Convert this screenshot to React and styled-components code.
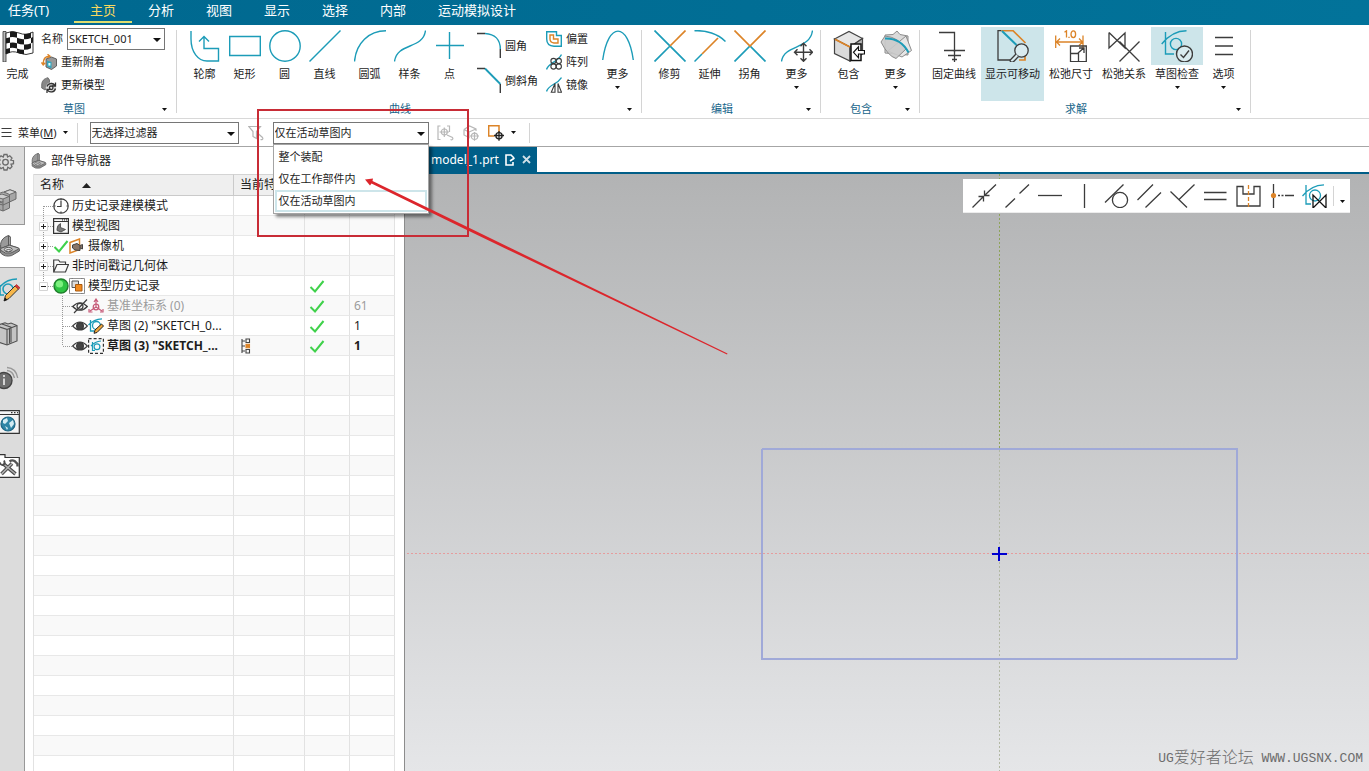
import React from 'react';
import styled, { createGlobalStyle, css } from 'styled-components';

const BLUE = '#1c9cb8';
const ORANGE = '#dc8428';
const INK = '#3c3c3c';

const GlobalStyle = createGlobalStyle`
  * { box-sizing: border-box; }
  body {
    margin: 0;
    background: #fff;
    color: #1c1c1c;
    font-family: "Noto Sans", "Noto Sans CJK SC", sans-serif;
    font-size: 11px;
    line-height: 16px;
    overflow: hidden;
  }
  button, select { font: inherit; color: inherit; margin: 0; padding: 0; border: 0; background: none; }
  svg { display: block; flex: none; }
  a { color: inherit; text-decoration: none; }
`;

const Page = styled.div`
  position: relative;
  display: flex;
  flex-direction: column;
  height: 100vh;
  overflow: hidden;
`;

/* ---------- menu bar ---------- */
const MenuBar = styled.nav`
  display: flex;
  flex: none;
  height: 25px;
  background: linear-gradient(90deg, #00688f, #02739a);
  color: #fff;
  font-size: 13px;
`;
const TaskMenu = styled.button`
  width: 74px;
  padding: 0 0 6px 8px;
  text-align: left;
`;
const MenuTab = styled.button`
  padding: 0 16px;
  padding-bottom: ${p => (p.$active ? 2 : 6)}px;
  border-bottom: ${p => (p.$active ? '2px solid #e0dc6c' : '0')};
  height: ${p => (p.$active ? 23 : 25)}px;
  color: ${p => (p.$active ? '#f8d860' : '#fff')};
`;

/* ---------- ribbon ---------- */
const Ribbon = styled.div`
  display: flex;
  flex: none;
  padding: 2px 0 1px;
  border-bottom: 1px solid #d8d8d8;
`;
const Group = styled.section`
  display: flex;
  flex-direction: column;
  flex: none;
  padding: 0 4px 0 8px;
  margin-left: ${p => (p.$clipped ? -10 : 0)}px;
`;
const GroupTools = styled.div`
  display: flex;
  gap: 1px;
  height: 74px;
`;
const GroupFooter = styled.div`
  display: flex;
  align-items: center;
  margin: 0 -4px 0 -8px;
`;
const GroupTitle = styled.span`
  flex: 1;
  text-align: center;
  color: #17658a;
`;
const Launcher = styled.button`
  width: 18px;
  height: 16px;
  padding-left: 4px;
`;
const Divider = styled.div`
  flex: none;
  width: 1px;
  margin: 3px 0 4px;
  background: #d4d4d4;
`;
const Space = styled.div`
  flex: none;
  width: ${p => p.$w}px;
`;
const ToolButton = styled.button`
  display: flex;
  flex-direction: column;
  align-items: center;
  flex: none;
  min-width: 39px;
  height: 74px;
  white-space: nowrap;
  background: ${p => (p.$on ? '#cde5ea' : 'none')};
`;
const IconBox = styled.span`
  display: flex;
  justify-content: center;
  width: 100%;
  height: 38px;
  padding-top: 3px;
  background: ${p => (p.$on ? '#cde5ea' : 'none')};
`;
const ToolLabel = styled.span`
  padding: 1px 4px 4px;
`;
const Stack = styled.div`
  display: flex;
  flex-direction: column;
  ${p => p.$tall && css`padding-top: 1px;`}
`;
const SmallTool = styled.button`
  display: flex;
  align-items: center;
  gap: 4px;
  height: ${p => (p.$tall ? 35 : 23)}px;
  white-space: nowrap;
`;
const Field = styled.label`
  display: flex;
  align-items: center;
  gap: 4px;
  height: 23px;
  padding-top: 1px;
  white-space: nowrap;
`;

/* ---------- select boxes ---------- */
const SelectWrap = styled.span`
  position: relative;
  display: block;
  flex: none;
  width: ${p => p.$w}px;
`;
const SelectBox = styled.select`
  appearance: none;
  display: block;
  width: 100%;
  height: 22px;
  padding: 0 16px 0 1px;
  border: 1px solid #767676;
  border-radius: 0;
  background: #fff;
`;
const SelectCaret = styled.svg`
  position: absolute;
  right: 4px;
  top: 10px;
  pointer-events: none;
`;
const OptionList = styled.ul`
  position: absolute;
  z-index: 5;
  top: 22px;
  left: 0;
  width: 100%;
  margin: 0;
  padding: 1px;
  list-style: none;
  border: 1px solid #a4a4a4;
  background: #fff;
  box-shadow: 3px 3px 3px rgba(0, 0, 0, 0.45);
`;
const Option = styled.li`
  height: 22px;
  padding: 1px 2px;
  border: 2px solid ${p => (p.$current ? '#cde5ea' : 'transparent')};
`;

/* ---------- selection toolbar ---------- */
const SelectionBar = styled.div`
  display: flex;
  align-items: center;
  flex: none;
  height: 28px;
  border-bottom: 1px solid #a6a6a6;
`;
const MenuButton = styled.button`
  display: flex;
  align-items: center;
  gap: 6px;
  height: 22px;
  padding-left: 1px;
  white-space: nowrap;
`;
const BarDivider = styled.div`
  width: 1px;
  height: 20px;
  background: #d4d4d4;
`;
const IconButton = styled.button`
  display: flex;
  align-items: center;
  justify-content: center;
  width: ${p => p.$w || 26}px;
  height: ${p => (p.$low ? 34 : 22)}px;
  padding-top: ${p => (p.$low ? 12 : 0)}px;
`;

/* ---------- body ---------- */
const Body = styled.div`
  display: flex;
  flex: 1;
  min-height: 0;
`;
const Rail = styled.nav`
  display: flex;
  flex-direction: column;
  flex: none;
  width: 25px;
  background: #dcdcdc;
`;
const RailButton = styled.button`
  display: flex;
  align-items: center;
  width: 25px;
  height: ${p => p.$h || 44}px;
  overflow: hidden;
  ${p => p.$active
    ? css`background: #fff; border-top: 1px solid #989898; border-bottom: 1px solid #989898;`
    : css`border-right: 1px solid #989898;`}
`;
const RailFill = styled.div`
  flex: 1;
  border-right: 1px solid #989898;
`;
const Navigator = styled.aside`
  display: flex;
  flex-direction: column;
  flex: none;
  width: 380px;
  padding: 0 9px 0 8px;
  border-right: 1px solid #8c8c8c;
  overflow: hidden;
  font-size: 12px;
`;
const NavTitle = styled.h1`
  display: flex;
  align-items: center;
  gap: 4px;
  flex: none;
  height: 27px;
  margin: 0 0 0 -2px;
  font-size: 12px;
  font-weight: 400;
`;
const Tree = styled.table`
  flex: none;
  width: 100%;
  table-layout: fixed;
  border-collapse: separate;
  border-spacing: 0;
  border-left: 1px solid #e2e2e2;
`;
const HeadCell = styled.th`
  width: ${p => p.$w};
  height: 22px;
  padding: 0 6px;
  border-top: 1px solid #d4d4d4;
  border-bottom: 1px solid #cacaca;
  border-right: 1px solid #cacaca;
  background: #efefef;
  font-weight: 400;
  text-align: left;
  white-space: nowrap;
  overflow: hidden;
`;
const HeadLabel = styled.span`
  display: flex;
  align-items: center;
  gap: 18px;
`;
const Row = styled.tr`
  background: ${p => (p.$odd ? '#f9f9f9' : '#fff')};
  color: ${p => (p.$dim ? '#9c9c9c' : 'inherit')};
  font-weight: ${p => (p.$bold ? 700 : 400)};
`;
const Cell = styled.td`
  height: 20px;
  padding: 0 0 0 ${p => p.$pad || 0}px;
  border-right: 1px solid #e2e2e2;
  border-bottom: 1px solid #e8e8e8;
  white-space: nowrap;
  overflow: hidden;
  vertical-align: middle;
`;
const Item = styled.div`
  display: flex;
  align-items: center;
  height: 19px;
`;
const ItemText = styled.span`
  padding-left: 3px;
`;

/* ---------- graphics window ---------- */
const Viewport = styled.main`
  display: flex;
  flex-direction: column;
  flex: 1;
  min-width: 0;
`;
const FileTabs = styled.div`
  display: flex;
  flex: none;
  height: 27px;
  border-bottom: 2px solid #005e88;
`;
const FileTab = styled.button`
  display: flex;
  align-items: center;
  gap: 6px;
  padding: 0 6px 0 26px;
  background: #005e88;
  color: #fff;
  font-size: 12px;
`;
const Canvas = styled.div`
  position: relative;
  flex: 1;
  background: linear-gradient(#b2b3b4, #e5e6e8);
  overflow: hidden;
`;
const Sketch = styled.svg`
  position: absolute;
  inset: 0;
  width: 100%;
  height: 100%;
`;
const FloatBar = styled.div`
  position: absolute;
  top: 5px;
  right: 19px;
  display: flex;
  align-items: center;
  height: 34px;
  padding-left: 5px;
  background: #fff;
  border-bottom: 1px solid #ececec;
`;
const ConstraintButton = styled.button`
  display: flex;
  justify-content: center;
  width: 33px;
`;
const Watermark = styled.span`
  position: absolute;
  right: 6px;
  bottom: 2px;
  display: flex;
  align-items: center;
  color: #6c6c6c;
  font-family: "Liberation Mono", "Noto Sans CJK SC", monospace;
  font-size: 13px;
  line-height: 20px;
  white-space: pre;
`;
const WatermarkName = styled.span`
  font-size: 16px;
  font-weight: 300;
`;
const Annotation = styled.svg`
  position: absolute;
  top: 0;
  left: 0;
  z-index: 10;
  pointer-events: none;
`;

/* ---------- drawings ---------- */
const Svg = ({ w = 32, h = w, children, sw = 1.4, s = BLUE }) => (
  <svg width={w} height={h} viewBox={`0 0 ${w} ${h}`} fill="none" stroke={s} strokeWidth={sw} aria-hidden="true">
    {children}
  </svg>
);
const Caret = ({ big }) => big
  ? <Svg w={8} h={4} s="none"><path d="M0 0H8L4 4Z" fill="#111" /></Svg>
  : <Svg w={5} h={3} s="none"><path d="M0 0H5L2.5 3Z" fill="#111" /></Svg>;

const Bracket = ({ w = 16, h = 16 }) => (
  <svg width={w} height={h} viewBox="0 0 20 22" fill="none" stroke="#5a5a5a" strokeWidth="1" aria-hidden="true">
    <path d="M.6 13V9.5C1 5 4 2 8.5.6L10.2 1.8V11L3 14.5Z" fill="#9a9a9a" />
    <path d="M8.5.6 10.2 1.8V11L8.5 10Z" fill="#c4c4c4" />
    <path d="M.6 13.5 9.5 10.2 18.5 13Q19.8 13.8 19.4 16L11.5 20.6Q5 22.3.6 18Z" fill="#8f8f8f" />
    <path d="M.6 13.5 9.5 10.2 18.5 13Q19.4 13.6 18 14.4L11 18Q5 19.5.6 15.2Z" fill="#bdbdbd" />
    <ellipse cx="8.3" cy="14.6" rx="4" ry="2.2" fill="#e4e4e4" />
    <path d="M5.5 15.4Q8.3 13.6 11.3 15.2" />
  </svg>
);

const ico = {
  flag: (
    <Svg s="none">
      <path d="M1 1.5H4V32H1Z" fill="#bbb" stroke="#333" strokeWidth=".8" />
      <path d="M4 3Q10 0 17 3T31 2V23Q24 26 17 23T4 24Z" fill="#fff" stroke="#222" strokeWidth=".9" />
      <path d="M8 1.7Q12 1 15 2.2V7.8Q11 6.5 8 7.3ZM22 4Q26 4.2 29 2.5V8Q25 9.6 22 9.2ZM4 8.2 8 7.3V12.7L4 13.6ZM15 7.8Q19 9.5 22 9.2V14.6Q18 14.4 15 13.2ZM8 12.7Q12 12 15 13.2V18.4Q11 17.4 8 18ZM22 14.6Q26 14.8 29 13.2V18.3Q26 19.8 22 19.8ZM4 19 8 18V23Q6 23.2 4 24ZM15 18.4Q18 19.8 22 19.8V24.3Q18 24 15 22.6ZM29 8 31 7V12.5L29 13.2Z" fill="#1a1a1a" />
    </Svg>
  ),
  profile: <Svg><path d="M2 1V9C2 22 9 31 18 31H29.5V18.5H15V6.5M10 11.5L15 6.5L20 11.5" /></Svg>,
  rect: <Svg><path d="M.7 6.5H31.3V25.5H.7Z" /></Svg>,
  circle: <Svg><circle cx="16" cy="16" r="15.2" /></Svg>,
  line: <Svg><path d="M.5 31.5L31.5.5" /></Svg>,
  arc: <Svg><path d="M.5 31.5C2 13 15 .8 32 .8" /></Svg>,
  spline: <Svg><path d="M.5 31.5C3 12 29 20 31.5.5" /></Svg>,
  point: <Svg><path d="M2 15.5H30M15.5 2V29" /></Svg>,
  parabola: <Svg><path d="M.7 30C6-8.5 26-8.5 31.3 30" /></Svg>,
  fillet: <Svg w={24} h={27}><path d="M0 1.5H8M23.3 17V26" stroke={INK} /><path d="M8 1.5C18 2 23.3 8 23.3 17" /></Svg>,
  chamfer: <Svg w={24} h={27}><path d="M0 1.5H8M23.3 17V26" stroke={INK} /><path d="M8 1.5L23.3 17" strokeWidth="1.8" /></Svg>,
  offset: (
    <Svg w={16}><path d="M.7.7H10.5V4.5H15.3V15.3H8C3 15 .7 12 .7 8Z" /><path d="M4 4H7.5V8H12V12H8C5 11.5 4 10 4 8Z" stroke={ORANGE} /></Svg>
  ),
  pattern: (
    <Svg w={16}><path d="M.5 15.5C3 8 11 9 15.5.5" /><g stroke={INK} strokeWidth="1.1"><circle cx="7.5" cy="7" r="2.6" /><circle cx="12.8" cy="7" r="2.6" /><circle cx="7.5" cy="12.5" r="2.6" /><circle cx="12.8" cy="12.5" r="2.6" /></g></Svg>
  ),
  mirror: (
    <Svg w={16}><path d="M.5 14.5C3 7 11 8 15.5.5" /><path d="M9 6.5V15.3H5.3ZM12 6.5V15.3H15.5Z" stroke={INK} strokeWidth="1.1" /></Svg>
  ),
  reattach: (
    <Svg w={16}>
      <path d="M5 5L10.5 3 15.5 5V12L10.5 15.5 5 13Z" fill="#999" stroke="#555" strokeWidth=".9" />
      <path d="M6 6.5L10.5 8V14.5L6 12.5Z" fill="#35a5bd" stroke="none" /><rect x="7.4" y="9" width="2" height="2.6" fill="#dff" stroke="none" />
      <path d="M.5 8.5 2.2 11 4.3 8.8M2.2 10.5C2 5 4 2.5 8 2.2M6.5.3 9 2.2 6.5 4" stroke={ORANGE} />
    </Svg>
  ),
  update: (
    <Svg w={16} s="#333" sw={1.3}>
      <path d="M.7 8C.7 4 3 1.5 7 .7L8.5 3V9L4 13 .7 11Z" fill="#888" stroke="#555" strokeWidth=".7" />
      <circle cx="10" cy="10.5" r="5.2" fill="#ddd" stroke="none" />
      <path d="M6 9.5C7 6 12 5.5 14 8.5M14.5 5.5V9H11M14.5 11.5C13.5 15.5 8.5 16 6.5 13M6 16V12.3H9.5" /><circle cx="10.2" cy="10.8" r="1.8" />
    </Svg>
  ),
  trim: <Svg sw={1.7}><path d="M.5.5L31.5 31.5M.5 31.5L16 16" /><path d="M16 16L31.5.5" stroke={ORANGE} /></Svg>,
  extend: <Svg sw={1.5}><path d="M.5.8C12 0 24 4 31.5 11.5M.5 31.5L8 24" /><path d="M8 24L24 8" stroke={ORANGE} strokeWidth="1.7" /></Svg>,
  corner: <Svg sw={1.7}><path d="M.5 31.5L16 16 31.5 31.5" /><path d="M.5.5L16 16 31.5.5" stroke={ORANGE} /></Svg>,
  move: (
    <Svg><path d="M.5 31.5C3 14 29 20 31.5.5" /><path d="M13.5 22.3H31.5M22.5 13V31.5M16.5 19.3L13.5 22.3 16.5 25.3M28.5 19.3L31.5 22.3 28.5 25.3M19.5 16.3L22.5 13.3 25.5 16.3M19.5 28.3L22.5 31.3 25.5 28.3" stroke={INK} /></Svg>
  ),
  include: (
    <Svg s="#444" sw={1.2}>
      <path d="M1.5 9L16 1.5 29.5 8.5 17 17Z" fill="#e6e6e6" /><path d="M1.5 9L17 17V31L1.5 23.5Z" fill="#dadada" /><path d="M17 17L29.5 8.5V24L17 31Z" fill="#b4b4b4" />
      <path d="M2 9.3L17 17" stroke={ORANGE} strokeWidth="1.8" />
      <path d="M18 14H28V30.5H18Z" fill="#fff" stroke="#111" strokeWidth="1.5" />
      <path d="M31.5 20.5H25.5V16.8L20.5 22.3 25.5 27.8V24H31.5Z" fill="#fff" stroke="#111" />
    </Svg>
  ),
  includeMore: (
    <Svg s="#8c8c8c" sw={1}>
      <path d="M5 5L13 4.5 17 1 20 4.5 28 6V25L5 23Z" fill="#dadada" />
      <path d="M8 21 26 6 31.5 20.5 22 27Z" fill="#e6e6e6" />
      <path d="M1 12 5 6Q18 7 26 19L16 28.5Q8 26 1 12Z" fill="#cacaca" fillOpacity=".9" />
      <path d="M5 8.5Q21 8 28.5 22.5" stroke={BLUE} strokeWidth="2" />
    </Svg>
  ),
  fixed: <Svg s={INK} sw={1.3}><path d="M1 2.5H16.5V22M6 20.5H27M10 25.5H23M14 29.5H19" /><path d="M16.5 20V32" /></Svg>,
  movable: (
    <Svg s={INK} sw={1.3}>
      <path d="M4.5.7H1V30H14" /><path d="M4.5.7H16L28.5 13M28 24V30H22" stroke={ORANGE} strokeWidth="1.7" /><path d="M5 1L19.5 15" stroke={BLUE} strokeWidth="2" />
      <circle cx="24.5" cy="20.5" r="6.7" fill="#d9ebef" /><path d="M19 24 13 30.2C13 32.5 16 32.5 17 31.2L21.5 26.5" fill="#d9ebef" />
    </Svg>
  ),
  relaxDim: (
    <Svg s={INK} sw={1.3}>
      <path d="M.7 5.5V18M28 5.5V18M1 12H28M5 8.5L1.5 12 5 15.5M24 8.5L27.5 12 24 15.5" stroke={ORANGE} />
      <path d="M9.5 2.2 11.5.8V7.5M14 6.7V8" stroke={ORANGE} /><ellipse cx="18.3" cy="4.2" rx="2.3" ry="3.4" stroke={ORANGE} />
      <path d="M15.5 16H31.3V31.7H15.5ZM15.5 23.5H23.5V31.7M23 23L28.5 18.3M24 18H29V23" />
    </Svg>
  ),
  relaxRel: <Svg s={INK} sw={1.3}><path d="M1 2.5V18L17 3V18L1 2.5M17 3V11M11.5 31.5L31.5 11.5M11.5 11.5 31.5 31.5" /></Svg>,
  check: (
    <Svg>
      <path d="M.7 14C8 5 16 .8 25.5.8M4.5 2V24H13" /><circle cx="15" cy="14" r="5.6" />
      <circle cx="23.5" cy="24" r="8" stroke={INK} fill="#d9ebef" /><path d="M19.5 24.5L22.5 27.5 28 20.5" stroke={INK} />
    </Svg>
  ),
  options: <Svg s={INK} sw={1.7}><path d="M7 7.5H25M7 16H25M7 24.5H25" /></Svg>,

  menu: <Svg w={11} s={INK} sw={1}><path d="M.5 1.5H10.5M.5 5.5H10.5M.5 9.5H10.5" /></Svg>,
  funnel: <Svg w={16} s="#b4b4b4" sw={1.2}><path d="M.7 1.5H12.5L8.5 6.5V13.5L5 11.5V6.5ZM10 8.5L14.5 12.5C15.5 14 14 15.2 12.5 14.5" /></Svg>,
  snapGrey: <Svg w={17} h={16} s="#b8b8b8" sw={1.2}><path d="M3.5 1H1V14.5H3.5M10 1H12.5V7M2.5 7H12M7.3 2.5V12M10 10L15.5 12.5C16.5 14 15 15.3 13.5 14.5" /><circle cx="7.3" cy="7" r="3" /></Svg>,
  boxGrey: <Svg w={17} h={16} s="#b8b8b8" sw={1.2}><path d="M1 4.5L6.5 1 13 4V6M1 4.5V10L6 12.5V7L1 4.5M6 7L13 4M7 11H16M11.5 7V15.7" /><circle cx="11.5" cy="11.3" r="3.2" /></Svg>,
  snap: <Svg w={16} s="#222" sw={1.3}><path d="M6.5 11H.7V.7H11V7" stroke={ORANGE} strokeWidth="1.5" /><path d="M6 10.5H16M11 6V15.8" /><circle cx="11" cy="10.7" r="3.1" /></Svg>,

  gear: (
    <Svg w={18} s="#6c6c6c" sw={1.3}><path d="M7 1.5H10L10.6 4 12.8 2.8 15 5 13.8 7 16.5 7.7V10.7L14 11.3 15 13.5 13 15.6 10.8 14.3 10 17H7L6.3 14.4 4 15.6 2 13.5 3 11.3 .5 10.5V7.7L3 7 2 5 4 2.8 6.3 4Z" transform="translate(-3)" /><circle cx="5.5" cy="9.2" r="2.8" /></Svg>
  ),
  assembly: (
    <Svg w={18} h={24} s="#6a6a6a" sw={1}>
      <path d="M-5 6 3 3 9 5V10L2 13-5 11Z" fill="#b4b4b4" /><path d="M4 3 10 .8 16 3V10L9.5 13V19L3 22-5 19V12L3 14" fill="#a6a6a6" />
      <path d="M4 3 10 .8 16 3 9.5 5.5Z" fill="#d6d6d6" /><path d="M-5 7 2 5 9 7.5 3 10-5 8Z" fill="#cecece" />
      <path d="M9.5 5.5V13M3 10V22M-5 14 3 16 9.5 13" />
    </Svg>
  ),
  pencilSketch: (
    <Svg w={20} h={26} sw={1.6}>
      <path d="M-2 12C4 4 10 2 17 2M0 8V18H4" /><circle cx="8" cy="12" r="5" />
      <path d="M4 24 5.5 18.5 15 9 18.5 12 9 21.5Z" fill="#f6b64a" stroke="#333" strokeWidth="1" /><path d="M15 9 16.5 7.5 20 10.8 18.5 12Z" fill="#d33" stroke="#a33" strokeWidth=".8" /><path d="M4 24 5 20.5 7.5 23Z" fill="#111" stroke="none" />
    </Svg>
  ),
  books: (
    <Svg w={18} h={24} s="#505050" sw={1.1}>
      <path d="M-2 3 5 .8 8 2 11 1 17 3.5V19L7 23-2 20Z" fill="#c4c4c4" />
      <path d="M-2 4.5 7 7.5V23M7 7.5 17 3.5M2 2 11 5.2V20.5M9.5 6.5V21.5" />
    </Svg>
  ),
  info: (
    <Svg w={20} h={24} s="#999" sw={1.4}><circle cx="4" cy="14.5" r="8" fill="#6f6f6f" stroke="#444" /><path d="M4 12.5V19M4 9V11" stroke="#eee" strokeWidth="1.6" /><path d="M7 4.5Q13 5 14.5 12M7 1.5Q16 2 17.7 12" /></Svg>
  ),
  web: (
    <Svg w={20} h={24} s="#333" sw={1.2}><path d="M-2 .7H19.3V23.3H-2Z" fill="#f4f4f4" /><path d="M-2 4.5H19.3M11 2.6h1.5M14 2.6h1.5M17 2.6h1" /><circle cx="8" cy="14" r="7" fill="#2f86a6" stroke="#1f6684" /><path d="M3 10 7 8 8 11 5 14 3 13ZM9 13 13 10 14 14 11 18ZM5 16 8 18 7 20Z" fill="#d4ecf3" stroke="none" /></Svg>
  ),
  wrench: (
    <Svg w={20} h={24} s="#333" sw={1.2}>
      <path d="M-2 .7H5V3.5H19.3V23.3H-2Z" fill="#fff" />
      <path d="M1.5 20 12 9.5M3 9.5 15.5 20" stroke="#4a4a4a" strokeWidth="3.6" /><path d="M1.5 20 12 9.5M3 9.5 15.5 20" stroke="#b0b0b0" strokeWidth="1.6" />
      <path d="M0 8.5Q.5 11.5 3.5 11 5.5 9.5 4 6.5" stroke="#4a4a4a" strokeWidth="1.8" /><path d="M9.5 7.5Q12 5.5 14.5 7L17.5 10V12.5" stroke="#555" strokeWidth="2.4" />
    </Svg>
  ),

  clock: <Svg w={16} s={INK} sw={1.2}><circle cx="8" cy="8" r="7.2" /><path d="M8 3V8.5H4M8 .8V2.5M8 13.5V15M1 8H2.5M13.5 8H15" /></Svg>,
  view: (
    <Svg w={16} s="#333" sw={1.2}><path d="M.6.6H15.4V15.4H.6ZM.6 3.5H15.4M9 2H10M11 2H12M13 2H14" /><path d="M4 11Q4 7 7.5 5.5V9.5L12.5 11.5 8 14 4 12.5Z" fill="#777" stroke="#444" strokeWidth=".8" /></Svg>
  ),
  camera: (
    <Svg w={16} s="#444" sw={1}><path d="M1 4.5 10.5 1V11.5L1 15Z" stroke={ORANGE} strokeWidth="1.5" /><path d="M3.5 7 8 5.5 11 7.5V12.5L6 12 3.5 10ZM11 7.5 13.5 6.5V11L11 10" fill="#8a7566" /></Svg>
  ),
  folder: <Svg w={16} s={INK} sw={1.2}><path d="M.7 14V2H5.5L7 4H12.5V6.5M.7 14 4 6.5H15.5L12.5 14Z" /></Svg>,
  ball: <Svg w={16} s="none"><circle cx="8" cy="8" r="7" fill="#2fc443" stroke="#1f7e2b" /><circle cx="6.5" cy="6" r="3.6" fill="#7df07f" /></Svg>,
  history: (
    <Svg w={16} s="#777" sw={1}><path d="M.5 4V.5H4M12 .5H15.5V4M15.5 12V15.5H12M4 15.5H.5V12M2.5.5H13.5M2.5 15.5H13.5M.5 2.5V13.5M15.5 2.5V13.5" strokeWidth=".8" /><path d="M3 3H9.5V9.5H3Z" fill="#ddd" stroke="#555" /><path d="M6.5 6.5H13V13H6.5Z" fill="#f28a1e" stroke="#a85a10" /></Svg>
  ),
  eye: <Svg w={16} s={INK} sw={1.2}><path d="M.7 8Q8 0 15.3 8 8 16 .7 8Z" /><circle cx="8" cy="8" r="3.4" fill="#444" /></Svg>,
  eyeOff: <Svg w={16} s={INK} sw={1.2}><path d="M.7 8.5Q8 1 15.3 8.5 8 16 .7 8.5ZM2 15 15 1.5" /><circle cx="8" cy="8.3" r="3" /></Svg>,
  csys: <Svg w={16} s="#c65a78" sw={1.2}><path d="M8 9V1.5M6 4 8 1 10 4M8 9 2 13M8 9 14 13M1 11V14H4.5M12 14H15V11" /><circle cx="8" cy="9" r="2.8" /></Svg>,
  sketchPen: (
    <Svg w={16} sw={1.3}><path d="M.5 7C4 3 8 1 14 .8M2.5 2V13H6" /><circle cx="8.5" cy="7.5" r="4" /><path d="M6 15.3 7 12 13.5 6 15.5 8 9 14.5Z" fill="#f0a63a" stroke="#222" strokeWidth="1" /></Svg>
  ),
  sketchOn: <Svg w={16} sw={1.2}><path d="M.6.6H15.4V15.4H.6Z" stroke="#333" strokeDasharray="3 2" /><path d="M3 8Q7 3.5 13 3M4.5 4V12.5H7" /><circle cx="9" cy="8.8" r="2.9" /></Svg>,
  tick: <Svg w={16} s="#3fd14b" sw={2}><path d="M1.5 9 6 13.5 14.5 3" /></Svg>,
  feature: <Svg w={10} h={16} s="#444" sw={1.1}><path d="M1 1V15M1 3H4M1 8H4M1 13H4M5 1H8.5V4.5H5ZM5 11.5H8.5V15H5Z" /><path d="M5 6.2H8.5V9.7H5Z" fill={ORANGE} stroke={ORANGE} /></Svg>,
  edit: <Svg w={11} h={12} s="#fff" sw={1.6}><path d="M6.5 1H1V11H8V8M6 1L9 4M5 7 9.5 4" /></Svg>,
  close: <Svg w={9} s="#cfe0e8" sw={1.8}><path d="M1 1L8 8M8 1L1 8" /></Svg>,
};

const C = ({ children }) => <Svg w={25} h={24} s={INK} sw={1.3}>{children}</Svg>;
const constraints = [
  ['重合', <C><path d="M.5 23.5 11.5 12.5M12.5 11.5 24 .5M6.5 12.5H11.5V17.5M12.5 6.5V11.5H17.5" /></C>],
  ['共线', <C><path d="M.5 23.5 10 14.5M14.5 9.5 24 .5" /></C>],
  ['水平', <C><path d="M0 11.5H24" /></C>],
  ['竖直', <C><path d="M13.5 0V24" /></C>],
  ['相切', <C><circle cx="16" cy="16" r="7.6" /><path d="M1 18.5 19.5 .5" /></C>],
  ['平行', <C><path d="M.5 16 16 .5M8.5 23.5 24 8.5" /></C>],
  ['垂直', <C><path d="M.5 7.5 17 23.5M9 15.5 24.5.5" /></C>],
  ['相等', <C><path d="M1 8.5H23.5M1 15.5H23.5" /></C>],
  ['对称', <C><path d="M1 2.5H7V10H18V2.5H24V22H1Z" /><path d="M12.5 1V24" stroke={ORANGE} strokeDasharray="4 2" /></C>],
  ['中点', <C><path d="M4.5 0V24M9 11.5H11M12.5 11.5H14.5M16 11.5H25" /><circle cx="4.5" cy="11.5" r="2.6" fill={ORANGE} stroke="none" /></C>],
  ['松弛', <C><g stroke={BLUE}><path d="M.5 12C6 5 13 1 22 .8M4 1V20H9" /><circle cx="13" cy="11.5" r="5.5" /></g><path d="M11 11V24L24 11V24Z" stroke="#111" /></C>],
];

/* ---------- composed parts ---------- */
const Tool = ({ icon, label, on, iconOn, more }) => (
  <ToolButton type="button" $on={on}>
    <IconBox $on={iconOn}>{ico[icon]}</IconBox>
    <ToolLabel>{label}</ToolLabel>
    {more && <Caret />}
  </ToolButton>
);
const Small = ({ icon, label, tall }) => (
  <SmallTool type="button" $tall={tall}>{ico[icon]}{label}</SmallTool>
);
const RibbonGroup = ({ title, clipped, children }) => (
  <>
    <Group $clipped={clipped} aria-label={title}>
      <GroupTools>{children}</GroupTools>
      <GroupFooter>
        <GroupTitle>{title}</GroupTitle>
        <Launcher type="button" aria-label={`${title}选项`}><Caret /></Launcher>
      </GroupFooter>
    </Group>
    <Divider />
  </>
);
const Combo = ({ id, w, value, label, children }) => (
  <SelectWrap $w={w}>
    <SelectBox id={id} aria-label={label} defaultValue={value}><option>{value}</option></SelectBox>
    <SelectCaret width="8" height="4" viewBox="0 0 8 4" aria-hidden="true"><path d="M0 0H8L4 4Z" fill="#111" /></SelectCaret>
    {children}
  </SelectWrap>
);

/* Dotted connector and expander drawn ahead of a tree item. */
const Lead = ({ box, first, last }) => (
  <Svg w={19} h={20} s="#999" sw={1}>
    <path d={`M9.5 ${first ? 10 : 0}V${last ? 10 : 20}M10 10.5H19`} strokeDasharray="1 1" />
    {box && <><path d="M5.5 6.5H13.5V14.5H5.5Z" fill="#fff" stroke="#d4d4d4" /><path d={`M7 10.5H12${box === '+' ? 'M9.5 8V13' : ''}`} stroke="#222" /></>}
  </Svg>
);
const ChildLead = ({ last }) => (
  <Svg w={38} h={20} s="#999" sw={1}><path d={`M28.5 0V${last ? 10 : 20}M29 10.5H38`} strokeDasharray="1 1" /></Svg>
);

const rows = [
  { lead: <Lead first />, icons: ['clock'], text: '历史记录建模模式' },
  { lead: <Lead box="+" />, icons: ['view'], text: '模型视图' },
  { lead: <Lead box="+" />, icons: ['tick', 'camera'], text: '摄像机' },
  { lead: <Lead box="+" />, icons: ['folder'], text: '非时间戳记几何体' },
  { lead: <Lead box="-" last />, icons: ['ball', 'history'], text: '模型历史记录', tick: true },
  { lead: <ChildLead />, icons: ['eyeOff', 'csys'], text: '基准坐标系 (0)', tick: true, num: '61', dim: true },
  { lead: <ChildLead />, icons: ['eye', 'sketchPen'], text: '草图 (2) "SKETCH_0...', tick: true, num: '1' },
  { lead: <ChildLead last />, icons: ['eye', 'sketchOn'], text: '草图 (3) "SKETCH_...', tick: true, num: '1', bold: true, feature: true },
  ...Array.from({ length: 22 }, () => ({})),
];

const rail = [['gear', '设置', 30], ['assembly', '装配导航器', 47], ['bracket', '部件导航器', 44], ['pencilSketch', '草图'], ['books', '重用库'], ['info', '信息'], ['web', '浏览器'], ['wrench', '工具']];

export default function App() {
  return (
    <Page>
      <GlobalStyle />
      <MenuBar>
        <TaskMenu type="button">任务(T)</TaskMenu>
        {['主页', '分析', '视图', '显示', '选择', '内部', '运动模拟设计'].map((t, i) => (
          <MenuTab type="button" key={t} $active={i === 0}>{t}</MenuTab>
        ))}
      </MenuBar>

      <Ribbon>
        <RibbonGroup title="草图" clipped>
          <Tool icon="flag" label="完成" />
          <Space $w={2} />
          <Stack>
            <Field htmlFor="sketch-name">名称<Combo id="sketch-name" w={98} value="SKETCH_001" /></Field>
            <Small icon="reattach" label="重新附着" />
            <Small icon="update" label="更新模型" />
          </Stack>
          <Space $w={6} />
        </RibbonGroup>
        <RibbonGroup title="曲线">
          <Tool icon="profile" label="轮廓" />
          <Tool icon="rect" label="矩形" />
          <Tool icon="circle" label="圆" />
          <Tool icon="line" label="直线" />
          <Space $w={4} />
          <Tool icon="arc" label="圆弧" />
          <Tool icon="spline" label="样条" />
          <Tool icon="point" label="点" />
          <Space $w={6} />
          <Stack $tall>
            <Small icon="fillet" label="圆角" tall />
            <Small icon="chamfer" label="倒斜角" tall />
          </Stack>
          <Space $w={6} />
          <Stack>
            <Small icon="offset" label="偏置" />
            <Small icon="pattern" label="阵列" />
            <Small icon="mirror" label="镜像" />
          </Stack>
          <Space $w={8} />
          <Tool icon="parabola" label="更多" more />
        </RibbonGroup>
        <RibbonGroup title="编辑">
          <Tool icon="trim" label="修剪" />
          <Tool icon="extend" label="延伸" />
          <Tool icon="corner" label="拐角" />
          <Space $w={6} />
          <Tool icon="move" label="更多" more />
        </RibbonGroup>
        <RibbonGroup title="包含">
          <Tool icon="include" label="包含" />
          <Space $w={6} />
          <Tool icon="includeMore" label="更多" more />
        </RibbonGroup>
        <RibbonGroup title="求解">
          <Tool icon="fixed" label="固定曲线" />
          <Tool icon="movable" label="显示可移动" on />
          <Tool icon="relaxDim" label="松弛尺寸" />
          <Tool icon="relaxRel" label="松弛关系" />
          <Tool icon="check" label="草图检查" iconOn more />
          <Tool icon="options" label="选项" more />
          <Space $w={2} />
        </RibbonGroup>
      </Ribbon>

      <SelectionBar>
        <MenuButton type="button">{ico.menu}<span>菜单(<u>M</u>)</span><Caret /></MenuButton>
        <Space $w={9} />
        <BarDivider />
        <Space $w={12} />
        <Combo w={149} value="无选择过滤器" label="类型过滤器" />
        <IconButton type="button" $w={34} aria-label="过滤器">{ico.funnel}</IconButton>
        <Combo w={156} value="仅在活动草图内" label="选择范围">
          <OptionList role="listbox" aria-label="选择范围">
            <Option role="option">整个装配</Option>
            <Option role="option">仅在工作部件内</Option>
            <Option role="option" aria-selected="true" $current>仅在活动草图内</Option>
          </OptionList>
        </Combo>
        <Space $w={4} />
        <IconButton type="button" aria-label="捕捉">{ico.snapGrey}</IconButton>
        <IconButton type="button" aria-label="体捕捉">{ico.boxGrey}</IconButton>
        <IconButton type="button" $w={22} aria-label="点捕捉">{ico.snap}</IconButton>
        <IconButton type="button" $w={14} aria-label="更多捕捉"><Caret /></IconButton>
        <Space $w={8} />
        <BarDivider />
      </SelectionBar>

      <Body>
        <Rail>
          {rail.map(([k, label, h]) => (
            <RailButton type="button" key={k} aria-label={label} $h={h} $active={k === 'bracket'}>
              {k === 'bracket' ? <Bracket w={20} h={22} /> : ico[k]}
            </RailButton>
          ))}
          <RailFill />
        </Rail>

        <Navigator>
          <NavTitle><Bracket />部件导航器</NavTitle>
          <Tree>
            <thead>
              <tr>
                <HeadCell $w="200px"><HeadLabel>名称<Svg w={9} h={5} s="none"><path d="M0 5H9L4.5 0Z" fill="#222" /></Svg></HeadLabel></HeadCell>
                <HeadCell $w="71px">当前特</HeadCell>
                <HeadCell $w="45px" />
                <HeadCell $w="auto" />
              </tr>
            </thead>
            <tbody>
              {rows.map((r, i) => (
                <Row key={i} $odd={i % 2 === 1} $dim={r.dim} $bold={r.bold}>
                  <Cell>
                    {r.text && (
                      <Item>
                        {r.lead}
                        {r.icons.map(k => <React.Fragment key={k}>{ico[k]}</React.Fragment>)}
                        <ItemText>{r.text}</ItemText>
                      </Item>
                    )}
                  </Cell>
                  <Cell $pad={7}>{r.feature && ico.feature}</Cell>
                  <Cell $pad={4}>{r.tick && ico.tick}</Cell>
                  <Cell $pad={4}>{r.num}</Cell>
                </Row>
              ))}
            </tbody>
          </Tree>
        </Navigator>

        <Viewport>
          <FileTabs>
            <FileTab type="button">model_1.prt{ico.edit}{ico.close}</FileTab>
          </FileTabs>
          <Canvas>
            <Sketch aria-hidden="true" shapeRendering="crispEdges">
              <path d="M594.5 0V276" stroke="#8ea45a" strokeDasharray="2 2" />
              <path d="M594.5 276V800" stroke="#b2b8a4" strokeDasharray="2 2" />
              <line x1="2" y1="379.5" x2="100%" y2="379.5" stroke="#e69c9c" strokeDasharray="2 2" />
              <rect x="357" y="275" width="475" height="210" rx="1" fill="none" stroke="#a0a9d8" strokeWidth="2" />
              <path d="M587 380H602M594 373V387" stroke="#0000d0" strokeWidth="2" />
            </Sketch>
            <FloatBar>
              {constraints.map(([label, icon]) => (
                <ConstraintButton type="button" key={label} aria-label={label}>{icon}</ConstraintButton>
              ))}
              <Space $w={2} />
              <BarDivider />
              <IconButton type="button" $w={16} $low aria-label="更多约束"><Caret /></IconButton>
            </FloatBar>
            <Watermark>UG<WatermarkName>爱好者论坛</WatermarkName> WWW.UGSNX.COM</Watermark>
          </Canvas>
        </Viewport>
      </Body>

      <Annotation width="740" height="370" viewBox="0 0 740 370" aria-hidden="true">
        <rect x="258" y="110" width="210" height="126" fill="none" stroke="#c82c36" strokeWidth="2" />
        <path d="M365 179.5 373 178.5 372.5 181 470 228.3 727.5 353.5 727 354.5 469 231 371.5 183.5 370 185.5Z" fill="#dc262c" />
      </Annotation>
    </Page>
  );
}
